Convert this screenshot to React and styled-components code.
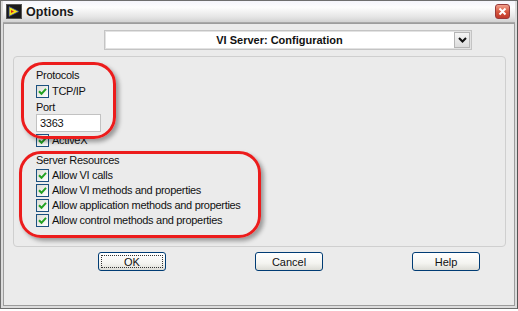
import styled, { createGlobalStyle } from "styled-components";

const GlobalStyle = createGlobalStyle`
  body {
    margin: 0;
    background: #ffffff;
    font-family: "Liberation Sans", Arial, sans-serif;
  }
`;

const Window = styled.div`
  position: relative;
  width: 518px;
  height: 309px;
  box-sizing: border-box;
  border: 1px solid #6e6e6e;
  border-right-color: #555;
  background: #dcdcdc;
  display: flex;
  flex-direction: column;
  padding: 0 2px 2px 2px;
`;

const TitleBar = styled.div`
  height: 21px;
  display: flex;
  align-items: center;
  gap: 4px;
  padding: 0 4px 0 3px;
  background: linear-gradient(#f4f4fb 0%, #fdfdfd 30%, #e6e6e6 75%, #d2d2d2 100%);
  border-bottom: 1px solid #a8a8a8;
`;

const Title = styled.span`
  font-size: 12.5px;
  font-weight: bold;
  color: #1a1a1a;
  flex: 1;
  letter-spacing: 0.1px;
`;

const CloseBtn = styled.div`
  width: 15px;
  height: 15px;
  border-radius: 3px;
  border: 1px solid #9a3a3a;
  box-sizing: border-box;
  background: linear-gradient(#f2a08c, #d4543c 55%, #c0392b);
  display: flex;
  align-items: center;
  justify-content: center;
  margin-right: 1px;
`;

const Client = styled.div`
  flex: 1;
  background: #ebebeb;
  border: 1px solid #9c9c9c;
  display: flex;
  flex-direction: column;
  padding: 6px 8px 0 9px;
`;

const Select = styled.div`
  margin-left: 91px;
  width: 368px;
  height: 20px;
  box-sizing: border-box;
  border: 1px solid #c4c4c4;
  box-shadow: inset 0 0 0 1px #e2e2e2;
  background: #ffffff;
  display: flex;
  align-items: center;
`;

const SelectText = styled.span`
  flex: 1;
  text-align: center;
  font-size: 11px;
  font-weight: bold;
  color: #111;
`;

const SelectArrow = styled.div`
  width: 16px;
  height: 16px;
  margin-right: 1px;
  box-sizing: border-box;
  border: 1px solid #b5b5b5;
  background: linear-gradient(#f6f6f6, #dcdcdc);
  display: flex;
  align-items: center;
  justify-content: center;
`;

const Group = styled.div`
  margin-top: 6px;
  height: 191px;
  box-sizing: border-box;
  border: 1px solid #cfcfcf;
  border-radius: 4px;
  padding: 11px 0 0 22px;
  display: flex;
  flex-direction: column;
  font-size: 11px;
  letter-spacing: -0.3px;
  color: #111;
`;

const Label = styled.div`
  height: 15px;
  line-height: 15px;
  margin-top: ${(p) => p.$top || 0}px;
`;

const Row = styled.label`
  display: flex;
  align-items: center;
  gap: 3px;
  height: 15px;
  line-height: 15px;
  margin-top: ${(p) => p.$top || 0}px;
`;

const Box = styled.span`
  width: 13px;
  height: 13px;
  box-sizing: border-box;
  border: 1px solid #1c5180;
  background: linear-gradient(135deg, #dcdcd6, #ffffff);
  display: flex;
  align-items: center;
  justify-content: center;
`;

const Field = styled.div`
  margin-top: ${(p) => p.$top || 0}px;
  width: 65px;
  height: 18px;
  box-sizing: border-box;
  border: 1px solid #c2c2c2;
  background: #fff;
  padding-left: 3px;
  line-height: 16px;
  font-size: 11px;
`;

const Buttons = styled.div`
  display: flex;
  gap: 89px;
  padding-left: 85px;
  margin-top: 5px;
`;

const Button = styled.div`
  width: 68px;
  height: 19px;
  box-sizing: border-box;
  border: 1px solid #003c74;
  border-radius: 3px;
  background: linear-gradient(#ffffff, #f4f4f0 60%, #dcdcd6);
  font-size: 11px;
  color: #111;
  display: flex;
  align-items: center;
  justify-content: center;
  position: relative;
  ${(p) =>
    p.$focus &&
    `
    &::after {
      content: "";
      position: absolute;
      inset: 2px;
      border: 1px dotted #333;
    }
  `}
`;

const Highlight = styled.div`
  position: absolute;
  left: ${(p) => p.$x}px;
  top: ${(p) => p.$y}px;
  width: ${(p) => p.$w}px;
  height: ${(p) => p.$h}px;
  box-sizing: border-box;
  border: 3px solid #ec1c1c;
  border-radius: 22px;
  box-shadow: 3px 3px 4px rgba(0, 0, 0, 0.35);
  pointer-events: none;
`;

const Check = () => (
  <Box>
    <svg width="9" height="9" viewBox="0 0 9 9">
      <path d="M1 4.2 L3.5 6.8 L8 1.8" fill="none" stroke="#21a121" strokeWidth="2" />
    </svg>
  </Box>
);

const AppIcon = () => (
  <svg width="16" height="15" viewBox="0 0 16 15">
    <rect x="0.5" y="0.5" width="15" height="14" fill="#1a1a1a" stroke="#555" />
    <path d="M3 2.5 L13 7.5 L3 12.5 Z" fill="#f2e21a" stroke="#2a3fa0" strokeWidth="0.8" />
    <path d="M5 6 L8 7.5 L5 9 Z" fill="#d42020" />
  </svg>
);

const rows = [
  "Allow VI calls",
  "Allow VI methods and properties",
  "Allow application methods and properties",
  "Allow control methods and properties",
];

export default function App() {
  return (
    <>
      <GlobalStyle />
      <Window>
        <TitleBar>
          <AppIcon />
          <Title>Options</Title>
          <CloseBtn>
            <svg width="9" height="9" viewBox="0 0 9 9">
              <path d="M1.5 1.5 L7.5 7.5 M7.5 1.5 L1.5 7.5" stroke="#fff" strokeWidth="2" />
            </svg>
          </CloseBtn>
        </TitleBar>
        <Client>
          <Select>
            <SelectText>VI Server: Configuration</SelectText>
            <SelectArrow>
              <svg width="9" height="6" viewBox="0 0 9 6">
                <path d="M1 1 L4.5 4.5 L8 1" fill="none" stroke="#111" strokeWidth="2" />
              </svg>
            </SelectArrow>
          </Select>
          <Group>
            <Label>Protocols</Label>
            <Row $top={1}>
              <Check />
              TCP/IP
            </Row>
            <Label $top={1}>Port</Label>
            <Field $top={-1}>3363</Field>
            <Row $top={1}>
              <Check />
              ActiveX
            </Row>
            <Label $top={5}>Server Resources</Label>
            {rows.map((r) => (
              <Row key={r}>
                <Check />
                {r}
              </Row>
            ))}
          </Group>
          <Buttons>
            <Button $focus>OK</Button>
            <Button>Cancel</Button>
            <Button>Help</Button>
          </Buttons>
        </Client>
        <Highlight $x={20} $y={61} $w={95} $h={77} />
        <Highlight $x={18} $y={150} $w={242} $h={87} />
      </Window>
    </>
  );
}
